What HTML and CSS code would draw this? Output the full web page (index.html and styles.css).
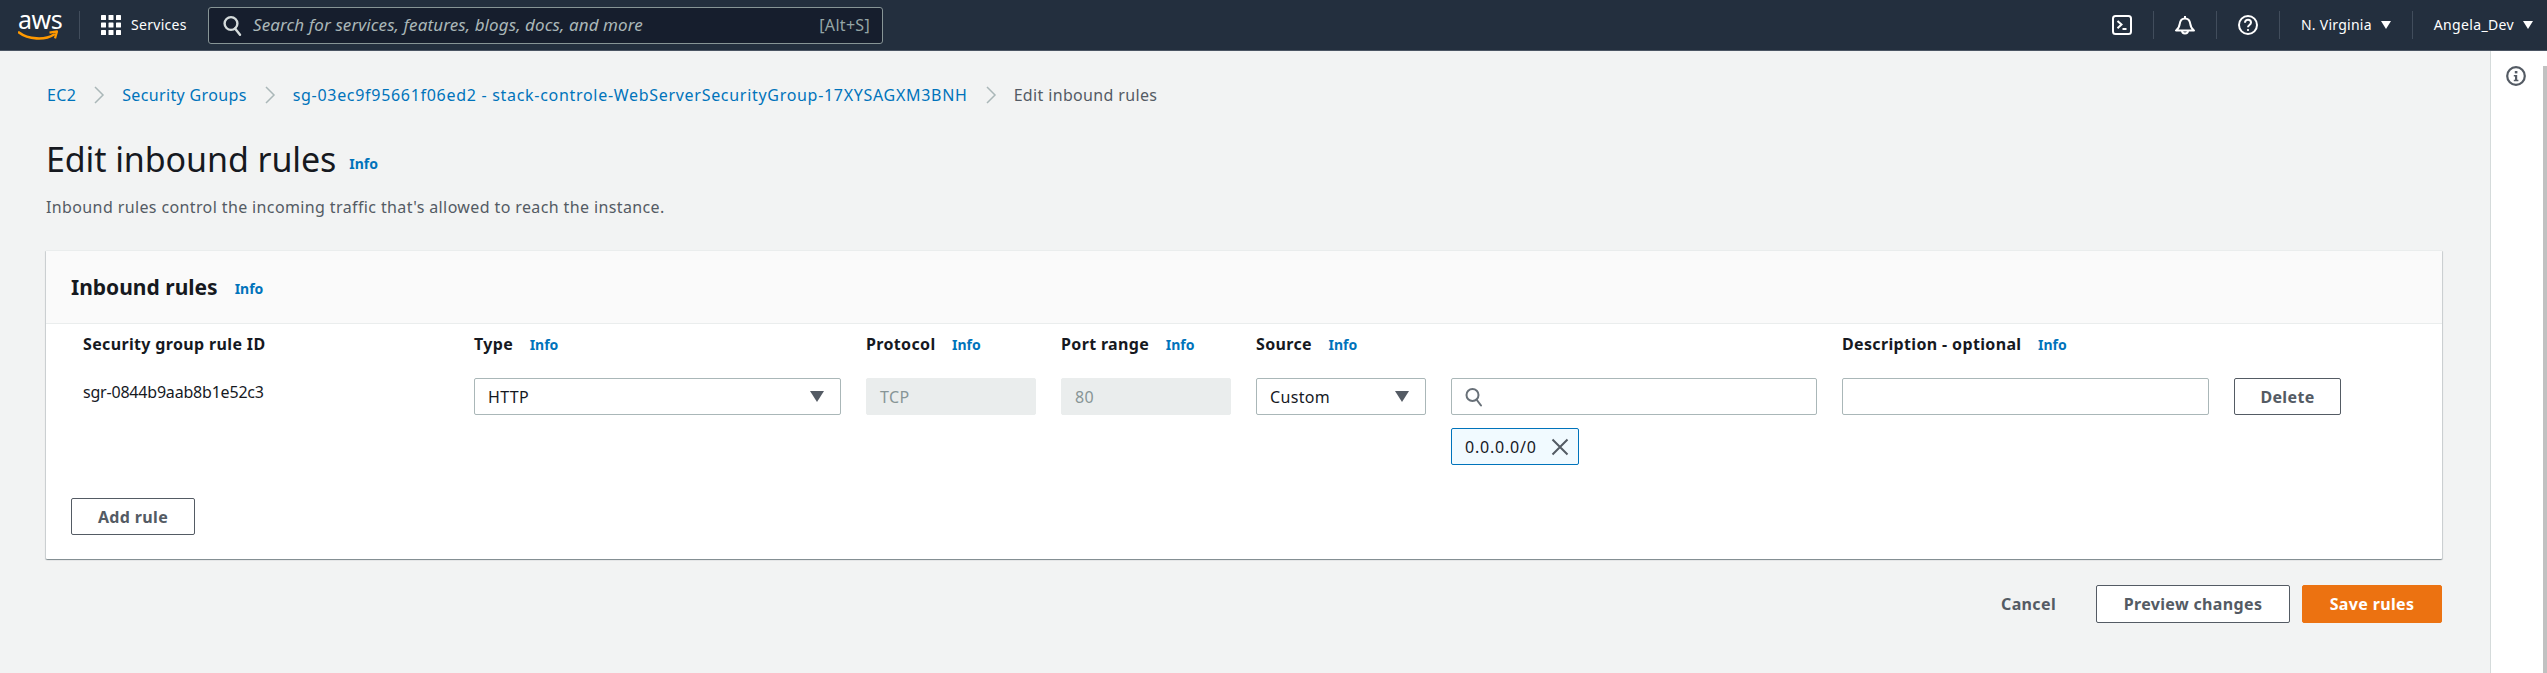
FILE: index.html
```html
<!DOCTYPE html>
<html lang="en">
<head>
<meta charset="utf-8">
<title>Edit inbound rules</title>
<link rel="stylesheet" href="styles.css">
</head>
<body>
<header class="topbar">
  <a class="logo">
    <span class="logo-text">aws</span>
    <svg class="smile" width="40" height="12" viewBox="0 0 40 12"><path d="M1 2.500C10 9.500 27 10.500 36 4.500" fill="none" stroke="#ff9900" stroke-width="2.600" stroke-linecap="round"/><path d="M31.500 2.600L39 1.400L37 8.400" fill="none" stroke="#ff9900" stroke-width="2.200" stroke-linejoin="round"/></svg>
  </a>
  <span class="divider nav-divider"></span>
  <svg class="grid-icon" width="20" height="20" viewBox="0 0 20 20" fill="#fff"><rect width="5" height="5" rx=".6"/><rect x="7.500" width="5" height="5" rx=".6"/><rect x="15" width="5" height="5" rx=".6"/><rect y="7.500" width="5" height="5" rx=".6"/><rect x="7.500" y="7.500" width="5" height="5" rx=".6"/><rect x="15" y="7.500" width="5" height="5" rx=".6"/><rect y="15" width="5" height="5" rx=".6"/><rect x="7.500" y="15" width="5" height="5" rx=".6"/><rect x="15" y="15" width="5" height="5" rx=".6"/></svg>
  <span class="services">Services</span>
  <div class="search">
    <svg width="19" height="21" viewBox="0 0 19 21" fill="none" stroke="#d5dbdb" stroke-width="2.400"><circle cx="8" cy="8.500" r="6.400"/><path d="M12 13.500l5 6.200" stroke-linecap="round"/></svg>
    <span class="search-text">Search for services, features, blogs, docs, and more</span>
    <span class="shortcut">[Alt+S]</span>
  </div>
  <div class="utilities">
    <svg class="util util-term" width="20" height="20" viewBox="0 0 20 20" fill="none" stroke="#fff" stroke-width="2"><rect x="1" y="1" width="18" height="18" rx="2.500"/><path d="M5.500 6l4 3.600-4 3.600"/><path d="M10.500 14h4"/></svg>
    <span class="divider"></span>
    <svg class="util" width="20" height="20" viewBox="0 0 20 20" fill="none" stroke="#fff" stroke-width="2" stroke-linejoin="round"><path d="M1 15.500h18c-3-2-3.400-4-3.800-6.800C14.800 5.500 13 3.500 10 3.500S5.200 5.500 4.800 8.700C4.400 11.500 4 13.500 1 15.500z"/><path d="M10 1v2.500"/><path d="M7 15.500a3 3 0 0 0 6 0"/></svg>
    <span class="divider"></span>
    <svg class="util" width="20" height="20" viewBox="0 0 20 20" fill="none" stroke="#fff" stroke-width="2"><circle cx="10" cy="10" r="9"/><path d="M7 7.800c0-1.900 1.300-3 3-3s3 1.100 3 2.800c0 2.400-3 2.300-3 4.600"/><circle cx="10" cy="15" r=".7" fill="#fff" stroke-width="1"/></svg>
    <span class="divider"></span>
    <span class="menu menu-region">N. Virginia<i class="caret caret-white"></i></span>
    <span class="divider"></span>
    <span class="menu menu-user">Angela_Dev<i class="caret caret-white"></i></span>
  </div>
</header>

<div class="layout">
  <main class="content">
    <nav class="crumbs">
      <a>EC2</a>
      <svg class="chev" width="12" height="20" viewBox="0 0 12 20" fill="none" stroke="#aab7b8" stroke-width="1.500"><path d="M2 2l8 8-8 8"/></svg>
      <a>Security Groups</a>
      <svg class="chev" width="12" height="20" viewBox="0 0 12 20" fill="none" stroke="#aab7b8" stroke-width="1.500"><path d="M2 2l8 8-8 8"/></svg>
      <a class="crumb-long">sg-03ec9f95661f06ed2 - stack-controle-WebServerSecurityGroup-17XYSAGXM3BNH</a>
      <svg class="chev" width="12" height="20" viewBox="0 0 12 20" fill="none" stroke="#aab7b8" stroke-width="1.500"><path d="M2 2l8 8-8 8"/></svg>
      <span class="crumb-current">Edit inbound rules</span>
    </nav>
    <div class="page-head">
      <h1>Edit inbound rules</h1>
      <a class="info">Info</a>
    </div>
    <p class="lede">Inbound rules control the incoming traffic that's allowed to reach the instance.</p>

    <section class="card">
      <div class="card-head">
        <h2>Inbound rules</h2>
        <a class="info">Info</a>
      </div>
      <div class="rules">
        <div class="label">Security group rule ID</div>
        <div class="label">Type <a class="info">Info</a></div>
        <div class="label">Protocol <a class="info">Info</a></div>
        <div class="label">Port range <a class="info">Info</a></div>
        <div class="label">Source <a class="info">Info</a></div>
        <div></div>
        <div class="label">Description - optional <a class="info">Info</a></div>
        <div></div>

        <div class="rule-id">sgr-0844b9aab8b1e52c3</div>
        <div class="field select type-select">HTTP<i class="caret caret-gray"></i></div>
        <div class="field disabled">TCP</div>
        <div class="field disabled">80</div>
        <div class="field select">Custom<i class="caret caret-gray"></i></div>
        <div class="source-cell">
          <div class="field">
            <svg width="18" height="20" viewBox="0 0 18 20" fill="none" stroke="#687078" stroke-width="2"><circle cx="7.500" cy="8" r="6"/><path d="M11.500 12.500l4.500 6" stroke-linecap="round"/></svg>
          </div>
          <div class="chip">0.0.0.0/0
            <svg width="18" height="18" viewBox="0 0 18 18" fill="none" stroke="#545b64" stroke-width="2"><path d="M1.500 1.500l15 15M16.500 1.500l-15 15"/></svg>
          </div>
        </div>
        <div class="field"></div>
        <button class="btn btn-small">Delete</button>
      </div>
      <div class="card-foot">
        <button class="btn btn-add">Add rule</button>
      </div>
    </section>

    <div class="actions">
      <a class="cancel">Cancel</a>
      <button class="btn btn-preview">Preview changes</button>
      <button class="btn btn-primary">Save rules</button>
    </div>
  </main>
  <aside class="panel">
    <svg class="panel-info" width="20" height="20" viewBox="0 0 20 20" fill="none"><circle cx="10" cy="10" r="8.800" stroke="#545b64" stroke-width="2.200"/><rect x="8.800" y="5" width="2.600" height="2.400" fill="#545b64"/><path d="M7.800 9h3.400v4.800h1.200v1.400H7.800v-1.400h1.200V10.400H7.800z" fill="#545b64"/></svg>
    <div class="scrollbar"></div>
  </aside>
</div>
</body>
</html>
```

FILE: styles.css
```css
* { box-sizing: border-box; }
html, body { margin: 0; height: 673px; overflow: hidden; }
body {
  background: #f2f3f3;
  color: #16191f;
  font-family: "Noto Sans", "Liberation Sans", sans-serif;
  font-size: 16px;
  line-height: 20px;
  letter-spacing: 0.35px;
}
a { color: #0073bb; }
h1, h2, p { margin: 0; }

.topbar {
  height: 51px;
  background: #232f3e;
  border-bottom: 1px solid #4b5563;
  display: flex;
  align-items: center;
  color: #fff;
  padding-left: 18px;
}
.logo { width: 40px; height: 36px; position: relative; display: block; }
.logo-text {
  display: block;
  color: #fff;
  font-size: 25px;
  line-height: 24px;
  text-align: center;
  letter-spacing: -0.5px;
}
.smile { display: block; margin-top: -1px; }
.divider { width: 1px; height: 28px; background: #414d5c; flex: none; }
.nav-divider { margin-left: 21px; }
.grid-icon { margin-left: 21px; }
.services { margin-left: 10px; font-size: 14px; letter-spacing: 0.3px; width: 64px; white-space: nowrap; }
.search {
  margin-left: 13px;
  width: 675px;
  height: 37px;
  background: #161e2d;
  border: 1px solid #879596;
  border-radius: 3px;
  display: flex;
  align-items: center;
  padding: 0 12px 0 14px;
  gap: 11px;
}
.search-text { flex: 1; font-style: italic; color: #aab7b8; font-size: 17px; letter-spacing: 0.1px; white-space: nowrap; }
.shortcut { color: #95a5a6; font-size: 16px; letter-spacing: 0.3px; }
.utilities { margin-left: auto; display: flex; align-items: center; padding-right: 14px; }
.util { margin: 0 21px; display: block; }
.util-term { margin-left: 0; }
.menu { display: flex; align-items: center; font-size: 14px; color: #fff; letter-spacing: 0.35px; }
.menu-region { margin: 0 21px; letter-spacing: 0.25px; }
.menu-user { margin-left: 21px; }
.caret { display: block; width: 0; height: 0; border-style: solid; border-color: transparent; }
.caret-white { margin-left: 9px; border-width: 8px 5px 0; border-top-color: #fff; }
.caret-gray { margin-left: auto; border-width: 11px 7px 0; border-top-color: #545b64; }

.layout { display: flex; height: 622px; }
.content { flex: 1; padding: 34px 48px 0 46px; min-width: 0; }
.crumbs { display: flex; align-items: center; padding-left: 1px; height: 20px; gap: 17px; white-space: nowrap; }
.crumb-long { letter-spacing: 0.7px; }
.crumb-current { color: #545b64; }
.page-head { display: flex; align-items: flex-end; margin: 33px 0 0; height: 42px; gap: 13px; }
h1 { font-size: 34px; line-height: 42px; font-weight: 400; letter-spacing: -0.1px; }
.info { font-size: 14px; font-weight: 700; letter-spacing: 0; line-height: 22px; }
.page-head .info { line-height: 32px; }
.lede { margin: 17px 0 0; color: #545b64; letter-spacing: 0.38px; }

.card {
  margin-top: 33px;
  background: #fff;
  border-top: 1px solid #eaeded;
  border-radius: 1px;
  box-shadow: 0 1px 1px 0 rgba(0, 28, 36, .3), 1px 1px 1px 0 rgba(0, 28, 36, .15), -1px 1px 1px 0 rgba(0, 28, 36, .15);
  height: 309px;
}
.card-head {
  height: 73px;
  background: #fafafa;
  border-bottom: 1px solid #eaeded;
  padding-left: 25px;
  display: flex;
  align-items: center;
  gap: 17px;
}
.card-head .info { padding-top: 4px; }
h2 { font-size: 21px; font-weight: 700; line-height: 28px; letter-spacing: 0; }
.rules {
  display: grid;
  grid-template-columns: 366px 367px 170px 170px 170px 366px 367px 107px;
  column-gap: 25px;
  padding: 10px 0 0 37px;
  align-items: start;
}
.label { font-weight: 700; height: 22px; margin-bottom: 22px; white-space: nowrap; }
.label .info { margin-left: 12px; }
.rule-id { line-height: 20px; padding-top: 4px; letter-spacing: -0.2px; }
.field {
  height: 37px;
  border: 1px solid #aab7b8;
  border-radius: 2px;
  background: #fff;
  display: flex;
  align-items: center;
  padding: 0 13px;
}
.select { padding-right: 16px; }
.disabled { background: #eaeded; border-color: #eaeded; color: #879596; }
.source-cell { display: flex; flex-direction: column; align-items: flex-start; gap: 13px; }
.source-cell .field { width: 100%; }
.chip {
  height: 37px;
  width: 128px;
  border: 1px solid #0073bb;
  border-radius: 2px;
  background: #f1faff;
  display: flex;
  align-items: center;
  justify-content: space-between;
  padding: 0 9px 0 13px;
  letter-spacing: 0.8px;
}
.btn {
  font: inherit;
  font-weight: 700;
  letter-spacing: inherit;
  color: #545b64;
  background: #fff;
  border: 1px solid #545b64;
  border-radius: 2px;
  height: 37px;
  padding: 0;
}
.btn-small { width: 107px; }
.card-foot { margin-top: 33px; padding-left: 25px; }
.btn-add { width: 124px; }
.actions { display: flex; justify-content: flex-end; align-items: center; margin-top: 26px; }
.cancel { color: #545b64; font-weight: 700; margin-right: 40px; }
.btn-preview { width: 194px; height: 38px; margin-right: 12px; }
.btn-primary { width: 140px; height: 38px; background: #ec7211; border-color: #ec7211; color: #fff; }

.panel {
  width: 57px;
  background: #fff;
  border-left: 1px solid #d5dbdb;
  display: flex;
  justify-content: space-between;
  align-items: flex-start;
  padding: 15px 0 0 15px;
}
.panel-info { display: block; }
.scrollbar { width: 4px; height: 607px; background: #c1c1c1; }
```
